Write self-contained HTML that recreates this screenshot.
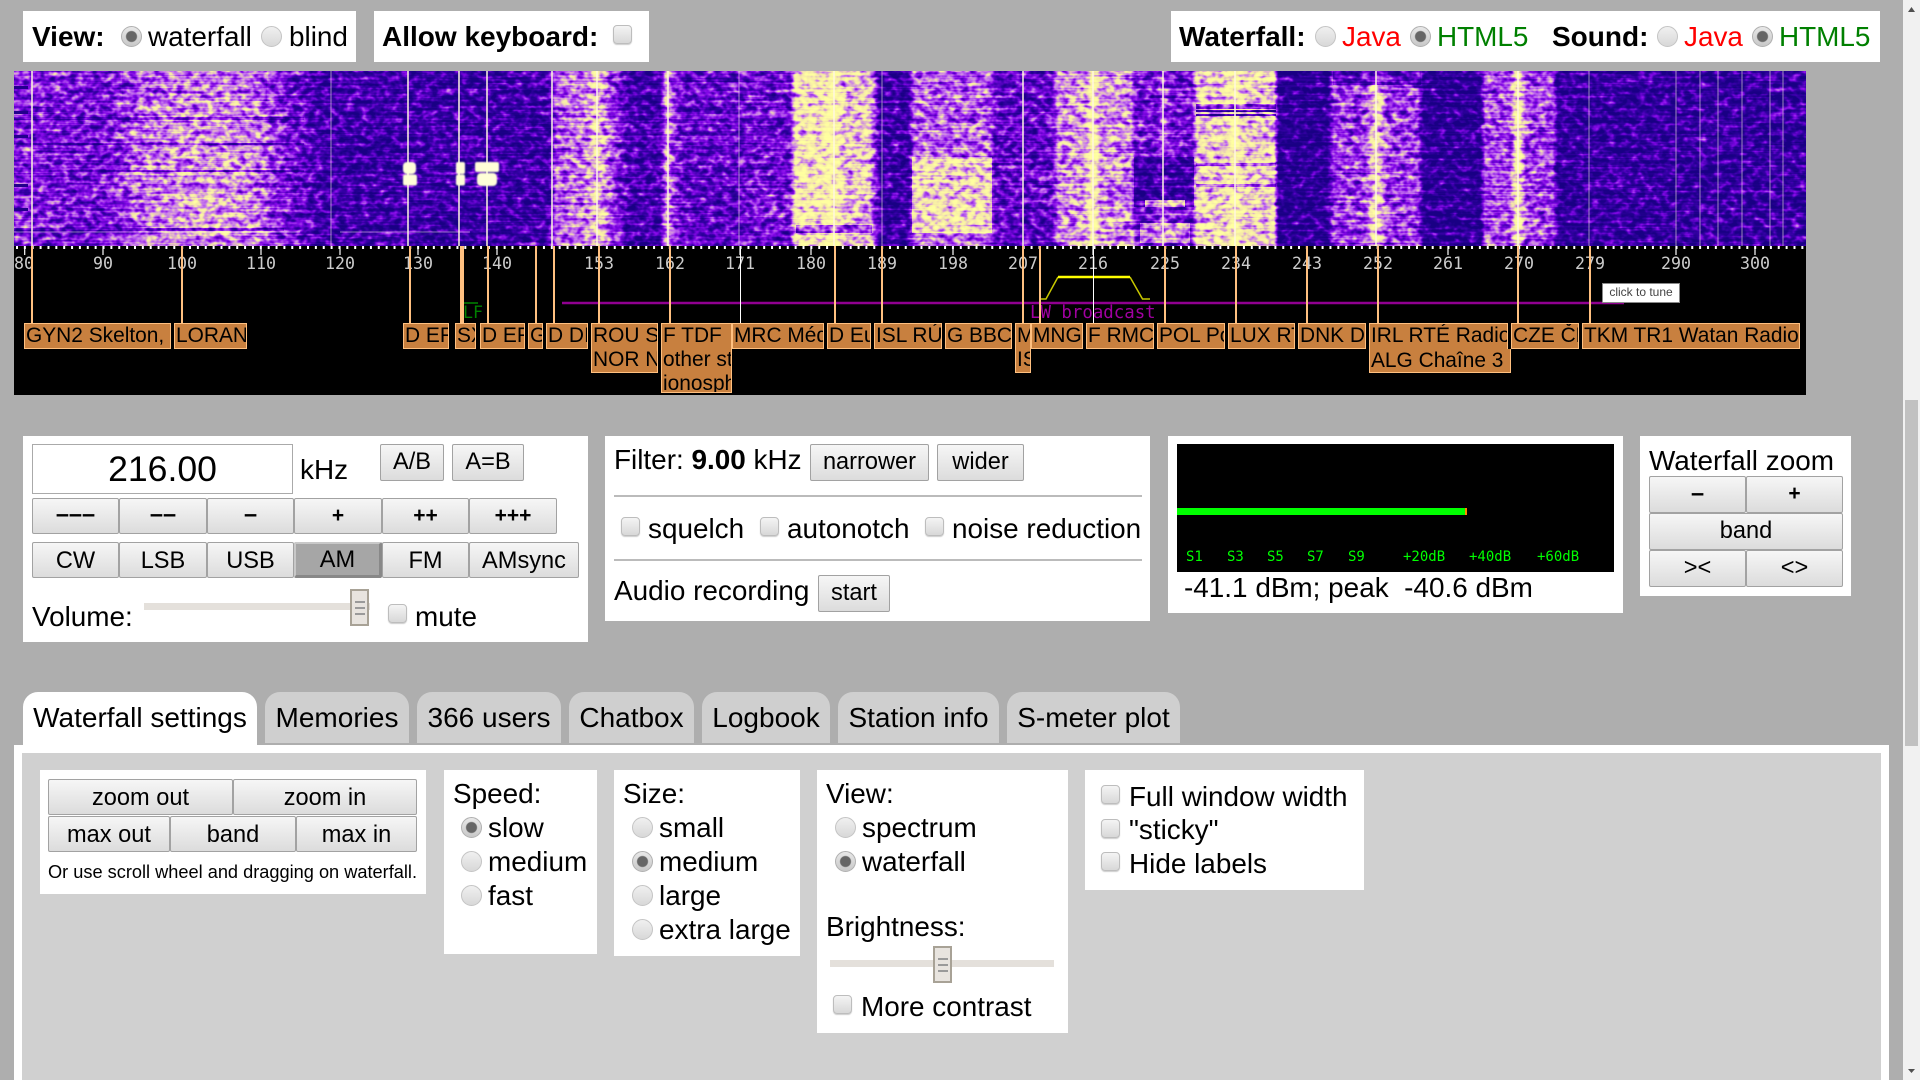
<!DOCTYPE html>
<html lang="en"><head><meta charset="utf-8"><title>WebSDR</title>
<style>
html,body{margin:0;padding:0;width:1920px;height:1080px;overflow:hidden;background:#aeaeae;font-family:"Liberation Sans",Arial,sans-serif;color:#000}
div,span{box-sizing:border-box}
.p{position:absolute;background:#fff}
.t{position:absolute;white-space:nowrap;font-size:27.9px;line-height:32px;height:32px}
.bd{font-weight:bold}
.t.bd{font-size:28px}
.b{position:absolute;display:flex;align-items:center;justify-content:center;font-size:23.6px;border:1px solid #a2a2a2;border-radius:2px;background:linear-gradient(#f6f6f6,#dcdcdc);white-space:nowrap;padding-bottom:1px}
.b.x{padding:2px 0 0}
.am{background:#a6a6a6;border-top:2px solid #c8c8c8;border-left:2px solid #c8c8c8;border-right:3px solid #888;border-bottom:3px solid #888;padding:1px 0 0}
.r{position:absolute;width:21px;height:21px;border-radius:50%;border:1px solid #c4c4c4;background:linear-gradient(#f0f0f0,#d8d8d8)}
.r.on{background:radial-gradient(circle,#666 0,#666 5px,rgba(0,0,0,0) 6px),linear-gradient(#e8e8e8,#c8c8c8);border-color:#b0b0b0}
.c{position:absolute;width:19px;height:19px;border-radius:4px;border:1px solid #bdbdbd;background:linear-gradient(#f4f4f4,#d8d8d8);box-shadow:0 1px 1px #ccc}
.l{position:absolute;background:#c8803f;border:1px solid #ffc080;font-size:20.9px;line-height:24px;overflow:hidden;white-space:nowrap;padding-left:1px;color:#000}
.tab{position:absolute;top:692px;height:51px;border-radius:15px 15px 0 0;background:#cfcfcf;display:flex;align-items:center;justify-content:center;font-size:28px;white-space:nowrap}
.track{position:absolute;height:7px;background:#e4e0db}
.th{position:absolute;width:19px;height:37px;border:2px solid #a8a296;background:#e8e4df repeating-linear-gradient(#9a9a9a 0,#9a9a9a 2px,rgba(0,0,0,0) 2px,rgba(0,0,0,0) 6px) center/10px 14px no-repeat}
.o{position:absolute;background:#000}
.h{position:absolute;background:rgba(0,0,0,.35)}
</style></head><body>

<svg width="0" height="0" style="position:absolute"><defs>
<filter id="wf" x="0" y="0" width="1" height="1" color-interpolation-filters="sRGB">
<feTurbulence type="fractalNoise" baseFrequency="0.13 0.17" numOctaves="2" seed="7" result="n1"/>
<feColorMatrix in="n1" type="matrix" values="1 0 0 0 0 1 0 0 0 0 1 0 0 0 0 0 0 0 0 1" result="g1"/>
<feTurbulence type="fractalNoise" baseFrequency="0.012 0.4" numOctaves="2" seed="3" result="n2"/>
<feColorMatrix in="n2" type="matrix" values="1 0 0 0 0 1 0 0 0 0 1 0 0 0 0 0 0 0 0 1" result="g2"/>
<feComposite in="SourceGraphic" in2="g1" operator="arithmetic" k1="0" k2="1" k3="1.0" k4="-0.5" result="a"/>
<feComposite in="a" in2="g2" operator="arithmetic" k1="0" k2="1" k3="0.5" k4="-0.25" result="b"/>
<feComponentTransfer in="b">
<feFuncR type="table" tableValues=".10 .22 .52 .78 .96 1"/>
<feFuncG type="table" tableValues="0 0 .03 .47 .91 1"/>
<feFuncB type="table" tableValues=".52 .66 .91 .93 .66 .63"/>
</feComponentTransfer>
</filter>
</defs></svg>

<!-- top panels -->
<div class="p" style="left:23px;top:11px;width:333px;height:51px"></div>
<div class="p" style="left:374px;top:11px;width:275px;height:51px"></div>
<div class="p" style="left:1171px;top:11px;width:709px;height:51px"></div>
<div class="t bd" style="left:32px;top:21px">View:</div>
<div class="r on" style="left:121px;top:26px"></div>
<div class="t" style="left:148px;top:21px">waterfall</div>
<div class="r" style="left:261px;top:26px"></div>
<div class="t" style="left:289px;top:21px">blind</div>
<div class="t bd" style="left:382px;top:21px">Allow keyboard:</div>
<div class="c" style="left:613px;top:25px"></div>
<div class="t bd" style="left:1179px;top:21px">Waterfall:</div>
<div class="r" style="left:1315px;top:26px"></div>
<div class="t" style="left:1342px;top:21px;color:#f00">Java</div>
<div class="r on" style="left:1410px;top:26px"></div>
<div class="t" style="left:1437px;top:21px;color:#008000">HTML5</div>
<div class="t bd" style="left:1552px;top:21px">Sound:</div>
<div class="r" style="left:1657px;top:26px"></div>
<div class="t" style="left:1684px;top:21px;color:#f00">Java</div>
<div class="r on" style="left:1752px;top:26px"></div>
<div class="t" style="left:1779px;top:21px;color:#008000">HTML5</div>

<!-- waterfall -->
<div style="position:absolute;left:14px;top:71px;width:1792px;height:175px;overflow:hidden">
<div style="position:absolute;left:-14px;top:0;width:1806px;height:175px;filter:url(#wf);background:linear-gradient(90deg,#666 14px,#5c5c5c 100px,#737373 122px,#949494 140px,#ababab 200px,#a0a0a0 250px,#8c8c8c 263px,#666 280px,#484848 306px,#333 320px,#2e2e2e 450px,#2e2e2e 548px,#8c8c8c 557px,#999 585px,#c4c4c4 597px,#808080 612px,#383838 630px,#383838 660px,#b3b3b3 667px,#4d4d4d 680px,#4d4d4d 735px,#595959 745px,#595959 790px,#d0d0d0 796px,#d0d0d0 820px,#f2f2f2 833px,#b8b8b8 845px,#bdbdbd 870px,#2e2e2e 880px,#2e2e2e 908px,#8c8c8c 914px,#8c8c8c 990px,#4d4d4d 995px,#4d4d4d 1052px,#a0a0a0 1058px,#a6a6a6 1085px,#f2f2f2 1092px,#a6a6a6 1100px,#a0a0a0 1131px,#595959 1135px,#595959 1155px,#8c8c8c 1163px,#595959 1172px,#595959 1192px,#c0c0c0 1197px,#c0c0c0 1225px,#f5f5f5 1235px,#c0c0c0 1245px,#c0c0c0 1274px,#1c1c1c 1279px,#1c1c1c 1327px,#7a7a7a 1334px,#7a7a7a 1365px,#d9d9d9 1376px,#7a7a7a 1388px,#7a7a7a 1418px,#1a1a1a 1424px,#1a1a1a 1480px,#808080 1485px,#808080 1510px,#f2f2f2 1518px,#808080 1526px,#808080 1553px,#262626 1558px,#262626 1806px)">
<div style="position:absolute;left:912px;top:86px;width:80px;height:76px;background:rgba(255,255,255,.5)"></div>
<div style="position:absolute;left:1134px;top:86px;width:60px;height:50px;background:rgba(0,0,0,.5)"></div>
<div style="position:absolute;left:1145px;top:129px;width:40px;height:7px;background:rgba(255,255,255,.6)"></div>
<div style="position:absolute;left:1140px;top:152px;width:50px;height:20px;background:rgba(255,255,255,.4)"></div>
<div style="position:absolute;left:1196px;top:33px;width:80px;height:5px;background:rgba(0,0,0,.5)"></div>
<div style="position:absolute;left:1196px;top:39px;width:80px;height:2px;background:rgba(0,0,0,.75)"></div>
<div style="position:absolute;left:1196px;top:43px;width:80px;height:2px;background:rgba(0,0,0,.75)"></div>
<div class="h" style="left:1196px;top:92px;width:80px;height:3px"></div>
<div class="h" style="left:1196px;top:113px;width:80px;height:3px"></div>
<div style="position:absolute;left:796px;top:154px;width:76px;height:8px;background:rgba(0,0,0,.4)"></div>
<div style="position:absolute;left:1333px;top:0;width:88px;height:14px;background:rgba(0,0,0,.4)"></div>
<div style="position:absolute;left:122px;top:0;width:145px;height:30px;background:rgba(0,0,0,.1)"></div>
<div class="h" style="left:14px;top:46px;width:290px;height:3px"></div>
<div class="h" style="left:14px;top:72px;width:290px;height:2px"></div>
<div class="h" style="left:14px;top:99px;width:290px;height:2px"></div>
<div class="h" style="left:14px;top:157px;width:270px;height:3px"></div>
</div></div>
<div class="o" style="left:14px;top:246px;width:1792px;height:149px"></div>

<svg width="1920" height="400" style="position:absolute;left:0;top:0">
<g stroke="#fff6e0" fill="none">
<path stroke-width="1.5" d="M32 71V246M408 71V246M459 71V246M487 71V246M552 71V246M597 71V246M668 71V246M834 71V246M1023 71V246M1093 71V246M1163 71V246M1235 71V246M1376 71V246M1518 71V246"/>
<path stroke-width="1" opacity=".55" d="M331 71V246M739 71V246M882 71V246M1589 71V246M1676 71V246M1742 71V246M1770 71V246M1783 71V246M1718 71V246M1700 71V246"/>
<path stroke-width="1" opacity=".45" d="M14 232H300M340 232H470"/>
</g>
<g fill="#22008c"><rect x="14" y="86" width="14" height="3"/><rect x="14" y="111" width="14" height="3"/><rect x="14" y="135" width="14" height="3"/><rect x="14" y="184" width="14" height="3"/><rect x="14" y="208" width="14" height="3"/></g>
<g fill="#ffffd8" style="filter:blur(.8px)">
<rect x="403" y="162" width="13" height="12" rx="4"/><rect x="403" y="174.500" width="14" height="11" rx="2"/>
<rect x="456" y="162" width="9" height="12" rx="2"/><rect x="456" y="174.500" width="9" height="11" rx="2"/>
<rect x="475" y="162" width="24" height="10" rx="2"/><rect x="477" y="173" width="20" height="13" rx="4"/>
</g>
<path d="M14 247.5H1806" stroke="#fff" stroke-width="3" stroke-dasharray="2 5.865" stroke-dashoffset="-2"/>
<path d="M24.700 246V255M103 246V255M182 246V255M261 246V255M340 246V255M418 246V255M497 246V255M599 246V255M670 246V255M740 246V255M811 246V255M882 246V255M953 246V255M1023 246V255M1093 246V255M1165 246V255M1236 246V255M1307 246V255M1378 246V255M1448 246V255M1519 246V255M1590 246V255M1676 246V255M1755 246V255" stroke="#fff" stroke-width="1.2"/>
<g font-family="'DejaVu Sans Mono','Liberation Mono',monospace" font-size="16.6" fill="#ccc" text-anchor="middle">
<text x="24" y="269">80</text><text x="103" y="269">90</text><text x="182" y="269">100</text><text x="261" y="269">110</text><text x="340" y="269">120</text><text x="418" y="269">130</text><text x="497" y="269">140</text><text x="599" y="269">153</text><text x="670" y="269">162</text><text x="740" y="269">171</text><text x="811" y="269">180</text><text x="882" y="269">189</text><text x="953" y="269">198</text><text x="1023" y="269">207</text><text x="1093" y="269">216</text><text x="1165" y="269">225</text><text x="1236" y="269">234</text><text x="1307" y="269">243</text><text x="1378" y="269">252</text><text x="1448" y="269">261</text><text x="1519" y="269">270</text><text x="1590" y="269">279</text><text x="1676" y="269">290</text><text x="1755" y="269">300</text>
</g>
<path d="M562 303H1624" stroke="#900090" stroke-width="2.4"/>
<path d="M464 303H478" stroke="#006400" stroke-width="2"/>
<text x="463" y="318" font-family="'DejaVu Sans Mono',monospace" font-size="16.6" fill="#008000">LF</text>
<text x="1030" y="318" font-family="'DejaVu Sans Mono',monospace" font-size="17.4" fill="#a000a0">LW broadcast</text>
<path d="M1040 299H1046L1058 277M1130 277L1142.500 299H1150" stroke="#c8c800" stroke-width="1.5" fill="none"/>
<path d="M1058 277H1130" stroke="#ff0" stroke-width="2.4"/>
<path stroke="#ffc080" stroke-width="2" d="M32 246V323M182 246V323M410 246V323M488 246V323M536 246V323M554 246V323M599 246V323M670 246V323M835 246V323M882 246V323M1023 246V323M1040 246V323M1165 246V323M1236 246V323M1307 246V323M1378 246V323M1518 246V323M1590 246V323"/>
<path stroke="#ffc080" stroke-width="4" d="M462 246V323"/>
<path stroke="#fff" stroke-width="1" d="M740.500 246V323M1093.500 246V323"/>
</svg>

<div class="p" style="left:1602px;top:283px;width:78px;height:20px;border:1.5px solid #888;font-size:12px;line-height:17px;text-align:center;color:#444;white-space:nowrap">click to tune</div>

<!-- labels -->
<div class="l" style="left:24px;top:323px;width:147px;height:26px">GYN2 Skelton,</div>
<div class="l" style="left:174px;top:323px;width:73px;height:26px">LORAN</div>
<div class="l" style="left:403px;top:323px;width:46px;height:26px">D EF</div>
<div class="l" style="left:455px;top:323px;width:21px;height:26px">SX</div>
<div class="l" style="left:480px;top:323px;width:45px;height:26px">D EF</div>
<div class="l" style="left:528px;top:323px;width:15px;height:26px">G</div>
<div class="l" style="left:546px;top:323px;width:42px;height:26px">D DI</div>
<div class="l" style="left:591px;top:323px;width:67px;height:50px">ROU S<br>NOR N</div>
<div class="l" style="left:661px;top:323px;width:71px;height:70px">F TDF<br>other st<br>ionosph</div>
<div class="l" style="left:732px;top:323px;width:92px;height:26px">MRC Méd</div>
<div class="l" style="left:827px;top:323px;width:44px;height:26px">D Eu</div>
<div class="l" style="left:874px;top:323px;width:68px;height:26px">ISL RÚ</div>
<div class="l" style="left:945px;top:323px;width:67px;height:26px">G BBC</div>
<div class="l" style="left:1015px;top:323px;width:16px;height:50px">M<br>IS</div>
<div class="l" style="left:1031px;top:323px;width:52px;height:26px">MNG</div>
<div class="l" style="left:1086px;top:323px;width:68px;height:26px">F RMC</div>
<div class="l" style="left:1157px;top:323px;width:68px;height:26px">POL Po</div>
<div class="l" style="left:1228px;top:323px;width:67px;height:26px">LUX RT</div>
<div class="l" style="left:1298px;top:323px;width:68px;height:26px">DNK D</div>
<div class="l" style="left:1369px;top:349px;width:142px;height:24px;border-top:0;line-height:23px">ALG Chaîne 3</div>
<div class="l" style="left:1369px;top:323px;width:139px;height:26px;border-bottom:0">IRL RTÉ Radio</div>
<div class="l" style="left:1511px;top:323px;width:68px;height:26px">CZE ČR</div>
<div class="l" style="left:1582px;top:323px;width:218px;height:26px">TKM TR1 Watan Radio</div>

<!-- frequency panel -->
<div class="p" style="left:23px;top:436px;width:565px;height:206px"></div>
<div class="p" style="left:32px;top:444px;width:261px;height:50px;border:1px solid #aaa"></div>
<div class="t" style="left:32px;top:451px;width:261px;height:36px;line-height:36px;text-align:center;font-size:35.6px">216.00</div>
<div class="t" style="left:300px;top:454px">kHz</div>
<div class="b" style="left:380px;top:444px;width:64px;height:37px">A/B</div>
<div class="b" style="left:452px;top:444px;width:72px;height:37px">A=B</div>
<div class="b bd" style="left:32px;top:498px;width:87px;height:36px">–––</div>
<div class="b bd" style="left:119px;top:498px;width:88px;height:36px">––</div>
<div class="b bd" style="left:207px;top:498px;width:87px;height:36px">–</div>
<div class="b bd" style="left:294px;top:498px;width:88px;height:36px;font-size:21px">+</div>
<div class="b bd" style="left:382px;top:498px;width:87px;height:36px;font-size:21px">++</div>
<div class="b bd" style="left:469px;top:498px;width:88px;height:36px;font-size:21px">+++</div>
<div class="b x" style="left:32px;top:542px;width:87px;height:36px">CW</div>
<div class="b x" style="left:119px;top:542px;width:88px;height:36px">LSB</div>
<div class="b x" style="left:207px;top:542px;width:87px;height:36px">USB</div>
<div class="b am" style="left:294px;top:542px;width:88px;height:36px">AM</div>
<div class="b x" style="left:382px;top:542px;width:87px;height:36px">FM</div>
<div class="b x" style="left:469px;top:542px;width:110px;height:36px">AMsync</div>
<div class="t" style="left:32px;top:601px">Volume:</div>
<div class="track" style="left:144px;top:603px;width:226px"></div>
<div class="th" style="left:350px;top:589px"></div>
<div class="c" style="left:388px;top:604px"></div>
<div class="t" style="left:415px;top:601px">mute</div>

<!-- filter panel -->
<div class="p" style="left:605px;top:436px;width:545px;height:185px"></div>
<div class="t" style="left:614px;top:444px">Filter: <b>9.00</b> kHz</div>
<div class="b" style="left:810px;top:444px;width:119px;height:37px">narrower</div>
<div class="b" style="left:937px;top:444px;width:87px;height:37px">wider</div>
<div class="o" style="left:614px;top:495px;width:528px;height:2px;background:#bbb"></div>
<div class="c" style="left:621px;top:517px"></div>
<div class="t" style="left:648px;top:513px">squelch</div>
<div class="c" style="left:760px;top:517px"></div>
<div class="t" style="left:787px;top:513px">autonotch</div>
<div class="c" style="left:925px;top:517px"></div>
<div class="t" style="left:952px;top:513px">noise reduction</div>
<div class="o" style="left:614px;top:559px;width:528px;height:2px;background:#bbb"></div>
<div class="t" style="left:614px;top:575px">Audio recording</div>
<div class="b" style="left:818px;top:575px;width:72px;height:37px">start</div>

<!-- s-meter -->
<div class="p" style="left:1168px;top:436px;width:455px;height:177px"></div>
<div class="o" style="left:1177px;top:444px;width:437px;height:128px"></div>
<div class="o" style="left:1177px;top:508px;width:288px;height:7px;background:#0f0"></div>
<div class="o" style="left:1465px;top:508px;width:2px;height:7px;background:#f80"></div>
<svg width="437" height="128" style="position:absolute;left:1177px;top:444px"><g font-family="'DejaVu Sans Mono',monospace" font-size="14" fill="#0f0">
<text x="9" y="117">S1</text><text x="50" y="117">S3</text><text x="90" y="117">S5</text><text x="130" y="117">S7</text><text x="171" y="117">S9</text><text x="226" y="117">+20dB</text><text x="292" y="117">+40dB</text><text x="360" y="117">+60dB</text>
</g></svg>
<div class="t" style="left:1184px;top:572px;white-space:pre">-41.1 dBm; peak  -40.6 dBm</div>

<!-- zoom panel -->
<div class="p" style="left:1640px;top:436px;width:211px;height:160px"></div>
<div class="t" style="left:1649px;top:445px">Waterfall zoom</div>
<div class="b bd" style="left:1649px;top:476px;width:97px;height:37px">–</div>
<div class="b bd" style="left:1746px;top:476px;width:97px;height:37px;font-size:21px">+</div>
<div class="b" style="left:1649px;top:513px;width:194px;height:37px">band</div>
<div class="b" style="left:1649px;top:550px;width:97px;height:37px">&gt;&lt;</div>
<div class="b" style="left:1746px;top:550px;width:97px;height:37px">&lt;&gt;</div>

<!-- tabs -->
<div class="tab" style="left:23px;width:234px;height:56px;background:#fff;padding-bottom:5px">Waterfall settings</div>
<div class="tab" style="left:265px;width:144px">Memories</div>
<div class="tab" style="left:417px;width:144px">366 users</div>
<div class="tab" style="left:569px;width:125px">Chatbox</div>
<div class="tab" style="left:702px;width:128px">Logbook</div>
<div class="tab" style="left:838px;width:161px">Station info</div>
<div class="tab" style="left:1007px;width:173px">S-meter plot</div>

<!-- main -->
<div class="p" style="left:14px;top:745px;width:1875px;height:335px"></div>
<div class="o" style="left:22px;top:753px;width:1859px;height:327px;background:#d0d0d0"></div>

<div class="p" style="left:40px;top:770px;width:386px;height:124px"></div>
<div class="b x" style="left:48px;top:779px;width:185px;height:36px">zoom out</div>
<div class="b x" style="left:233px;top:779px;width:184px;height:36px">zoom in</div>
<div class="b x" style="left:48px;top:816px;width:122px;height:36px">max out</div>
<div class="b x" style="left:170px;top:816px;width:126px;height:36px">band</div>
<div class="b x" style="left:296px;top:816px;width:121px;height:36px">max in</div>
<div class="t" style="left:48px;top:856px;font-size:18.2px">Or use scroll wheel and dragging on waterfall.</div>

<div class="p" style="left:444px;top:770px;width:153px;height:184px"></div>
<div class="t" style="left:453px;top:778px">Speed:</div>
<div class="r on" style="left:461px;top:817px"></div>
<div class="t" style="left:488px;top:812px">slow</div>
<div class="r" style="left:461px;top:851px"></div>
<div class="t" style="left:488px;top:846px">medium</div>
<div class="r" style="left:461px;top:885px"></div>
<div class="t" style="left:488px;top:880px">fast</div>

<div class="p" style="left:614px;top:770px;width:186px;height:186px"></div>
<div class="t" style="left:623px;top:778px">Size:</div>
<div class="r" style="left:632px;top:817px"></div>
<div class="t" style="left:659px;top:812px">small</div>
<div class="r on" style="left:632px;top:851px"></div>
<div class="t" style="left:659px;top:846px">medium</div>
<div class="r" style="left:632px;top:885px"></div>
<div class="t" style="left:659px;top:880px">large</div>
<div class="r" style="left:632px;top:919px"></div>
<div class="t" style="left:659px;top:914px">extra large</div>

<div class="p" style="left:817px;top:770px;width:251px;height:263px"></div>
<div class="t" style="left:826px;top:778px">View:</div>
<div class="r" style="left:835px;top:817px"></div>
<div class="t" style="left:862px;top:812px">spectrum</div>
<div class="r on" style="left:835px;top:851px"></div>
<div class="t" style="left:862px;top:846px">waterfall</div>
<div class="t" style="left:826px;top:911px">Brightness:</div>
<div class="track" style="left:830px;top:960px;width:224px"></div>
<div class="th" style="left:933px;top:946px"></div>
<div class="c" style="left:833px;top:995px"></div>
<div class="t" style="left:861px;top:991px">More contrast</div>

<div class="p" style="left:1085px;top:770px;width:279px;height:120px"></div>
<div class="c" style="left:1101px;top:785px"></div>
<div class="t" style="left:1129px;top:781px">Full window width</div>
<div class="c" style="left:1101px;top:819px"></div>
<div class="t" style="left:1129px;top:814px">"sticky"</div>
<div class="c" style="left:1101px;top:852px"></div>
<div class="t" style="left:1129px;top:848px">Hide labels</div>

<!-- scrollbar -->
<div class="o" style="left:1903px;top:0;width:17px;height:1080px;background:#f1f1f1"></div>
<div class="o" style="left:1905px;top:400px;width:13px;height:346px;background:#c1c1c1"></div>
<svg width="17" height="1080" style="position:absolute;left:1903px;top:0"><path d="M5 12L8.500 7L12 12Z" fill="#505050"/><path d="M5 1069L8.500 1073L12 1069Z" fill="#505050"/></svg>
</body></html>
